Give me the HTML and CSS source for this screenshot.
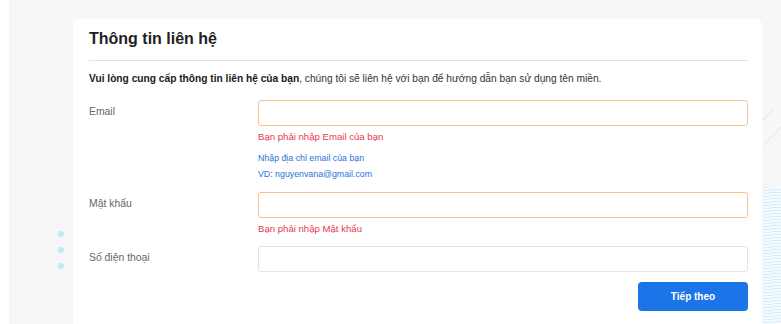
FILE: index.html
```html
<!DOCTYPE html>
<html lang="vi">
<head>
    <meta charset="UTF-8">
    <meta name="viewport" content="width=device-width, initial-scale=1.0">
    <title>Thông tin liên hệ</title>
    <link rel="stylesheet" href="styles.css">
</head>
<body>
    <div class="page">
        <!-- chấm trang trí bên trái -->
        <div class="dots">
            <span></span>
            <span></span>
            <span></span>
        </div>

        <!-- họa tiết bên phải -->
        <div class="side-deco">
            <svg class="side-lines" width="19" height="60" viewBox="0 0 19 60">
                <line x1="0" y1="22" x2="12" y2="10" stroke="#e6e6e6" stroke-width="1"/>
                <line x1="0" y1="48" x2="19" y2="28" stroke="#e6e6e6" stroke-width="1"/>
            </svg>
            <div class="side-waves"></div>
        </div>

        <div class="card">
            <h2>Thông tin liên hệ</h2>
            <hr class="divider">
            <p class="intro"><b>Vui lòng cung cấp thông tin liên hệ của bạn</b>, chúng tôi sẽ liên hệ với bạn để hướng dẫn bạn sử dụng tên miền.</p>

            <div class="field">
                <label class="field-label">Email</label>
                <div class="field-control">
                    <input type="text" class="input input-error">
                    <div class="error-text">Bạn phải nhập Email của bạn</div>
                    <div class="hint-text hint-first">Nhập địa chỉ email của bạn</div>
                    <div class="hint-text">VD: nguyenvana@gmail.com</div>
                </div>
            </div>

            <div class="field">
                <label class="field-label">Mật khẩu</label>
                <div class="field-control">
                    <input type="password" class="input input-error">
                    <div class="error-text">Bạn phải nhập Mật khẩu</div>
                </div>
            </div>

            <div class="field">
                <label class="field-label">Số điện thoại</label>
                <div class="field-control">
                    <input type="text" class="input">
                </div>
            </div>

            <div class="actions">
                <button class="btn-next">Tiếp theo</button>
            </div>
        </div>
    </div>
</body>
</html>
```

FILE: styles.css
```css
body {
    margin: 0;
    background: #fff;
    font-family: "Liberation Sans", Arial, sans-serif;
    overflow: hidden;
}

.page {
    position: relative;
    margin-left: 9px;
    height: 324px;
    box-sizing: border-box;
    padding: 19px 19px 0 64px;
    background: #f7f7f7;
    overflow: hidden;
}

.dots {
    position: absolute;
    left: 49px;
    top: 231px;
    display: grid;
    gap: 10px;
}

.dots span {
    width: 6px;
    height: 6px;
    border-radius: 50%;
    background: #bfe7f8;
}

.side-deco {
    position: absolute;
    right: 0;
    top: 0;
    bottom: 0;
    width: 18px;
    display: flex;
    flex-direction: column;
}

.side-lines {
    margin-top: 98px;
}

.side-waves {
    margin-top: 29px;
    flex: 1;
    background: repeating-linear-gradient(-4deg, #f4fafd 0 2px, #d6eef8 2px 3px);
}

.card {
    height: 100%;
    box-sizing: border-box;
    background: #fff;
    border-radius: 6px 6px 0 0;
    padding: 10px 14px 0 16px;
}

h2 {
    margin: 0;
    font-size: 16px;
    line-height: 20px;
    color: #222;
}

.divider {
    margin: 11px 0 0 0;
    border: none;
    border-top: 1px solid #e2e2e2;
}

.intro {
    margin: 11px 0 14px 0;
    font-size: 10.2px;
    line-height: 14px;
    color: #333;
}

.intro b {
    color: #1a1a1a;
}

.field {
    display: grid;
    grid-template-columns: 169px 1fr;
    margin-bottom: 10px;
}

.field-label {
    padding-top: 5px;
    font-size: 10.4px;
    line-height: 13px;
    color: #666;
}

.input {
    display: block;
    width: 100%;
    height: 26px;
    box-sizing: border-box;
    border: 1px solid #e3e3e3;
    border-radius: 3px;
    background: #fff;
    padding: 0 8px;
    outline: none;
}

.input-error {
    border-color: #fbc08c;
}

.error-text {
    margin-top: 4px;
    font-size: 9.6px;
    line-height: 14px;
    color: #e8374d;
}

.hint-text {
    font-size: 8.8px;
    line-height: 16px;
    color: #2a72dc;
}

.hint-first {
    margin-top: 6px;
}

.actions {
    display: flex;
    justify-content: flex-end;
    margin-top: 1px;
}

.btn-next {
    width: 110px;
    height: 29px;
    background: #1c74e9;
    color: #fff;
    border: none;
    border-radius: 4px;
    font-family: inherit;
    font-size: 10px;
    font-weight: bold;
    cursor: pointer;
}
```
